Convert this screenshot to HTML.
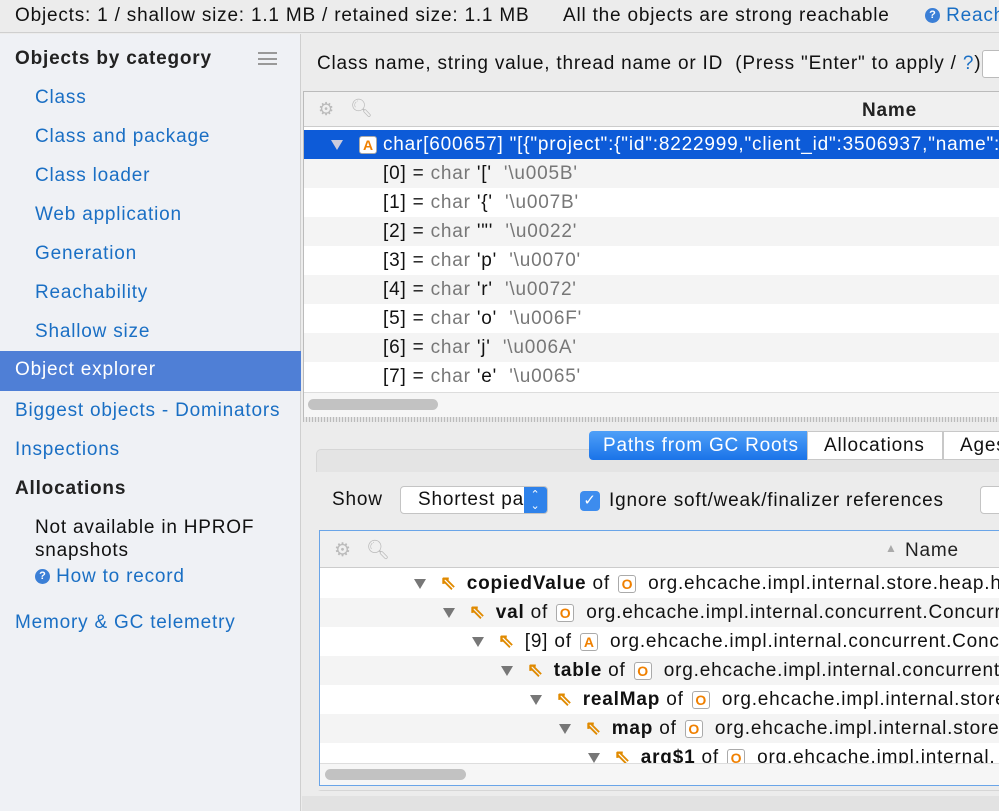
<!DOCTYPE html>
<html><head><style>
*{margin:0;padding:0;box-sizing:border-box}
body{width:999px;height:811px;overflow:hidden;background:#ececec;font-family:"Liberation Sans",sans-serif;font-size:19px;letter-spacing:0.8px;color:#111;position:relative}
.a{position:absolute;white-space:nowrap}
.lk{color:#1a6fc4}
.row{position:absolute;left:0;right:0;height:29px;line-height:29px;white-space:nowrap}
.g{color:#777}
.ic{display:inline-block;width:18px;height:18px;border:1px solid #aaa;border-radius:3px;background:#fff;color:#f08000;font-weight:bold;font-size:14px;letter-spacing:0;line-height:16px;text-align:center;vertical-align:middle;margin:0 6px 0 2px}
.tri{display:inline-block;width:0;height:0;border-left:6px solid transparent;border-right:6px solid transparent;border-top:10px solid #777;vertical-align:middle;margin-right:14px}
.arr{color:#e08a00;font-weight:bold;margin-right:10px}
.q{display:inline-block;width:15px;height:15px;border-radius:50%;background:#3b7fd6;color:#fff;font-size:11px;letter-spacing:0;font-weight:bold;line-height:15px;text-align:center;vertical-align:middle}
</style></head><body>
<div class="a" style="left:0;top:0;width:999px;height:33px;background:#ececec;border-bottom:1px solid #cfcfcf"></div>
<div class="a" style="left:15px;top:5px">Objects: 1 / shallow size: 1.1 MB / retained size: 1.1 MB</div>
<div class="a" style="left:563px;top:5px">All the objects are strong reachable</div>
<div class="a lk" style="left:925px;top:5px"><span class="q">?</span> Reach</div>

<div class="a" style="left:0;top:34px;width:301px;height:777px;background:#eff1f5;border-right:1px solid #cfcfcf"></div>
<div class="a" style="left:15px;top:48px;font-weight:bold;color:#222">Objects by category</div>
<div class="a" style="left:258px;top:52px;width:19px;height:13px;border-top:2px solid #999;border-bottom:2px solid #999"><div style="margin-top:3.5px;border-top:2px solid #999"></div></div>
<div class="a lk" style="left:35px;top:87px">Class</div>
<div class="a lk" style="left:35px;top:126px">Class and package</div>
<div class="a lk" style="left:35px;top:165px">Class loader</div>
<div class="a lk" style="left:35px;top:204px">Web application</div>
<div class="a lk" style="left:35px;top:243px">Generation</div>
<div class="a lk" style="left:35px;top:282px">Reachability</div>
<div class="a lk" style="left:35px;top:321px">Shallow size</div>
<div class="a" style="left:0;top:351px;width:301px;height:40px;background:#4f7fd6"></div>
<div class="a" style="left:15px;top:359px;color:#fff">Object explorer</div>
<div class="a lk" style="left:15px;top:400px">Biggest objects - Dominators</div>
<div class="a lk" style="left:15px;top:439px">Inspections</div>
<div class="a" style="left:15px;top:478px;font-weight:bold;color:#222">Allocations</div>
<div class="a" style="left:35px;top:517px">Not available in HPROF</div>
<div class="a" style="left:35px;top:540px">snapshots</div>
<div class="a lk" style="left:35px;top:566px"><span class="q">?</span> How to record</div>
<div class="a lk" style="left:15px;top:612px">Memory &amp; GC telemetry</div>

<div class="a" style="left:317px;top:53px">Class name, string value, thread name or ID &nbsp;(Press "Enter" to apply / <span class="lk">?</span>):</div>
<div class="a" style="left:982px;top:50px;width:30px;height:28px;background:#fff;border:1px solid #bbb;border-radius:3px"></div>

<div class="a" style="left:303px;top:91px;width:700px;height:326px;background:#fff;border:1px solid #bbb">
 <div style="position:absolute;left:0;right:0;top:0;height:35px;background:#f0f0f0;border-bottom:1px solid #ccc">
  <span class="a" style="left:14px;top:7px;color:#bbb;font-size:18px">⚙</span>
  <span class="a" style="left:46px;top:6px;color:#bbb;font-size:18px">&#x1F50D;&#xFE0E;</span>
  <span class="a" style="left:558px;top:8px;font-weight:bold;color:#222">Name</span>
 </div>
 <div class="row" style="top:38px;background:#0d5bd8;color:#fff;padding-left:27px"><span class="tri" style="border-top-color:#ccd"></span><span class="ic">A</span>char[600657] "[{"project":{"id":8222999,"client_id":3506937,"name":</div>
 <div class="row" style="top:67px;background:#f4f4f4;padding-left:79px">[0] = <span class="g">char</span> '[' &nbsp;<span class="g">'\u005B'</span></div>
 <div class="row" style="top:96px;padding-left:79px">[1] = <span class="g">char</span> '{' &nbsp;<span class="g">'\u007B'</span></div>
 <div class="row" style="top:125px;background:#f4f4f4;padding-left:79px">[2] = <span class="g">char</span> '"' &nbsp;<span class="g">'\u0022'</span></div>
 <div class="row" style="top:154px;padding-left:79px">[3] = <span class="g">char</span> 'p' &nbsp;<span class="g">'\u0070'</span></div>
 <div class="row" style="top:183px;background:#f4f4f4;padding-left:79px">[4] = <span class="g">char</span> 'r' &nbsp;<span class="g">'\u0072'</span></div>
 <div class="row" style="top:212px;padding-left:79px">[5] = <span class="g">char</span> 'o' &nbsp;<span class="g">'\u006F'</span></div>
 <div class="row" style="top:241px;background:#f4f4f4;padding-left:79px">[6] = <span class="g">char</span> 'j' &nbsp;<span class="g">'\u006A'</span></div>
 <div class="row" style="top:270px;padding-left:79px">[7] = <span class="g">char</span> 'e' &nbsp;<span class="g">'\u0065'</span></div>
 <div style="position:absolute;left:0;right:0;top:300px;height:25px;background:#f6f6f6;border-top:1px solid #ddd"></div>
 <div style="position:absolute;left:4px;top:307px;width:130px;height:11px;border-radius:6px;background:#c2c2c2"></div>
</div>
<div class="a" style="left:303px;top:417px;width:696px;height:5px;background:repeating-linear-gradient(90deg,#bbb 0 1px,#e6e6e6 1px 3px)"></div>

<div class="a" style="left:316px;top:449px;width:690px;height:342px;background:#e4e4e4;border:1px solid #d6d6d6;border-radius:5px"></div>
<div class="a" style="left:316px;top:472px;width:690px;height:318px;background:#ececec"></div>
<div class="a" style="left:589px;top:431px;width:218px;height:29px;background:linear-gradient(#4fa0f8,#1a73e8);border-radius:4px 0 0 4px;color:#fff;line-height:29px;padding-left:14px">Paths from GC Roots</div>
<div class="a" style="left:807px;top:431px;width:136px;height:29px;background:#fff;border:1px solid #c8c8c8;line-height:27px;padding-left:16px">Allocations</div>
<div class="a" style="left:943px;top:431px;width:70px;height:29px;background:#fff;border:1px solid #c8c8c8;line-height:27px;padding-left:16px">Ages</div>
<div class="a" style="left:332px;top:489px">Show</div>
<div class="a" style="left:400px;top:486px;width:148px;height:28px;background:#fff;border:1px solid #c4c4c4;border-radius:4px;overflow:hidden;line-height:26px;padding-left:17px">Shortest pa<div style="position:absolute;right:0;top:0;width:23px;height:28px;background:#2f82ea;color:#fff;font-size:11px;line-height:11px;text-align:center;padding-top:3px">⌃<br>⌄</div></div>
<div class="a" style="left:580px;top:491px;width:20px;height:20px;border-radius:4px;background:#3d8cee;color:#fff;font-size:15px;line-height:20px;text-align:center">✓</div>
<div class="a" style="left:609px;top:490px">Ignore soft/weak/finalizer references</div>
<div class="a" style="left:980px;top:486px;width:30px;height:28px;background:#fff;border:1px solid #c4c4c4;border-radius:4px"></div>

<div class="a" style="left:319px;top:530px;width:690px;height:256px;background:#fff;border:1px solid #6aa5e8;overflow:hidden">
 <div style="position:absolute;left:0;right:0;top:0;height:37px;background:#f0f0f0;border-bottom:1px solid #ccc">
  <span class="a" style="left:14px;top:8px;color:#bbb">⚙</span>
  <span class="a" style="left:46px;top:7px;color:#bbb">&#x1F50D;&#xFE0E;</span>
  <span class="a" style="left:565px;top:10px;color:#aaa;font-size:12px">▲</span>
  <span class="a" style="left:585px;top:9px;color:#222">Name</span>
 </div>
 <div class="row" style="top:38px;padding-left:94px"><span class="tri"></span><span class="arr">⇖</span><b>copiedValue</b> of <span class="ic">O</span> org.ehcache.impl.internal.store.heap.h</div>
 <div class="row" style="top:67px;background:#f4f4f4;padding-left:123px"><span class="tri"></span><span class="arr">⇖</span><b>val</b> of <span class="ic">O</span> org.ehcache.impl.internal.concurrent.Concurr</div>
 <div class="row" style="top:96px;padding-left:152px"><span class="tri"></span><span class="arr">⇖</span>[9] of <span class="ic">A</span> org.ehcache.impl.internal.concurrent.Conc</div>
 <div class="row" style="top:125px;background:#f4f4f4;padding-left:181px"><span class="tri"></span><span class="arr">⇖</span><b>table</b> of <span class="ic">O</span> org.ehcache.impl.internal.concurrent</div>
 <div class="row" style="top:154px;padding-left:210px"><span class="tri"></span><span class="arr">⇖</span><b>realMap</b> of <span class="ic">O</span> org.ehcache.impl.internal.store</div>
 <div class="row" style="top:183px;background:#f4f4f4;padding-left:239px"><span class="tri"></span><span class="arr">⇖</span><b>map</b> of <span class="ic">O</span> org.ehcache.impl.internal.store</div>
 <div class="row" style="top:212px;padding-left:268px"><span class="tri"></span><span class="arr">⇖</span><b>arg$1</b> of <span class="ic">O</span> org.ehcache.impl.internal.</div>
 <div style="position:absolute;left:0;right:0;top:232px;height:24px;background:#f6f6f6;border-top:1px solid #ddd"></div>
 <div style="position:absolute;left:5px;top:238px;width:141px;height:11px;border-radius:6px;background:#c2c2c2"></div>
</div>
<div class="a" style="left:302px;top:796px;width:697px;height:15px;background:#e2e2e2"></div>
</body></html>
